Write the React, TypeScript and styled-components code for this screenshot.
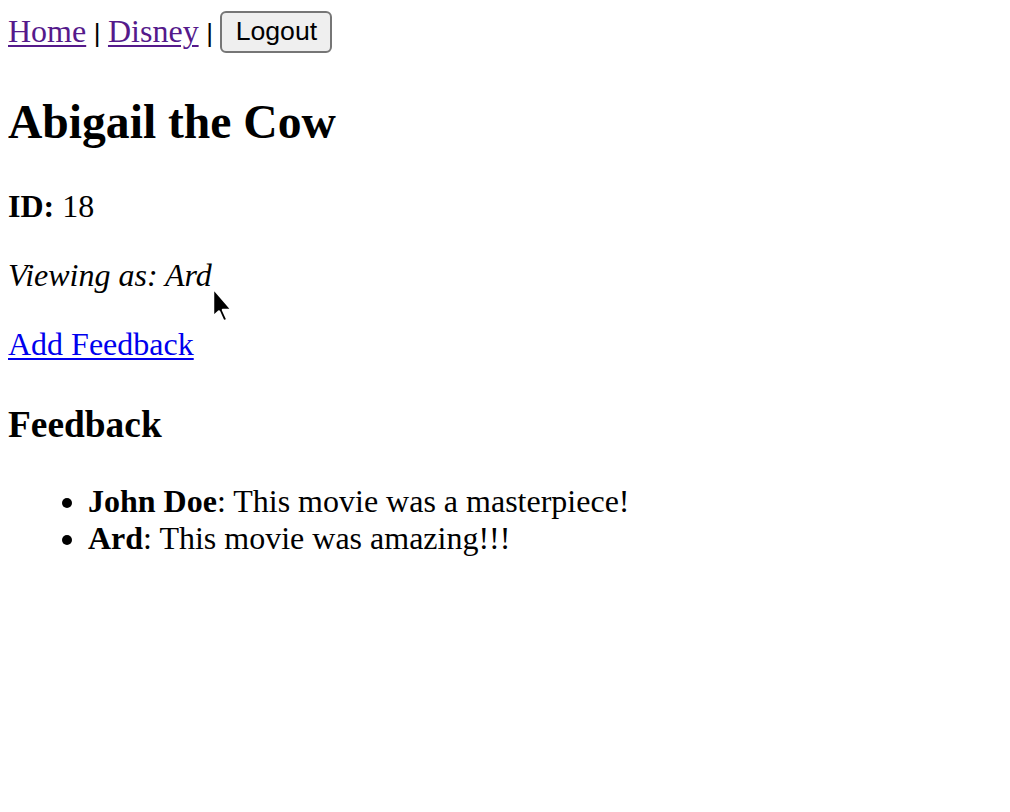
import React from "react";
import styled, { createGlobalStyle } from "styled-components";

const Global = createGlobalStyle`
  html, body { background: #fff; }
  body {
    margin: 8px;
    font-family: "Liberation Serif", "Times New Roman", serif;
    font-size: 32px;
    color: #000;
  }
`;

const Page = styled.div`
  position: relative;
`;

const Nav = styled.nav`
  display: block;
  line-height: 46px;
`;

const NavLink = styled.a<{ $visited?: boolean }>`
  color: ${(p) => (p.$visited ? "#551a8b" : "#0000ee")};
  text-decoration: underline;
  text-decoration-thickness: 2px;
  text-underline-offset: 3px;
`;

const Sep = styled.span`
  font-family: "Liberation Sans", Arial, sans-serif;
  font-size: 26px;
  margin: 0 7.5px;
`;

const Button = styled.button`
  font-family: "Liberation Sans", Arial, sans-serif;
  font-size: 26.67px;
  height: 42px;
  width: 112px;
  padding: 0;
  background: #efefef;
  border: 2px solid #767676;
  border-radius: 6px;
  color: #000;
  vertical-align: middle;
  position: relative;
  top: -3px;
`;

const Title = styled.h1`
  font-size: 47.6px;
  font-weight: bold;
  margin: 39px 0 39px;
`;

const Para = styled.p`
  margin: 32px 0;
`;

const Italic = styled.p`
  margin: 32px 0;
  font-style: italic;
`;

const SubTitle = styled.h3`
  font-size: 37.4px;
  font-weight: bold;
  margin: 40px 0 37px;
`;

const List = styled.ul`
  margin: 32px 0;
  padding-left: 80px;
  list-style: disc;
`;

const Item = styled.li`
  line-height: 37px;
`;

const Cursor = styled.svg`
  position: absolute;
  left: 189px;
  top: 264px;
  pointer-events: none;
`;

export default function App() {
  return (
    <>
      <Global />
      <Page>
        <Nav>
          <NavLink href="#" $visited>Home</NavLink>
          <Sep>|</Sep>
          <NavLink href="#" $visited>Disney</NavLink>
          <Sep>|</Sep>
          <Button>Logout</Button>
        </Nav>
        <Title>Abigail the Cow</Title>
        <Para>
          <strong>ID:</strong> 18
        </Para>
        <Italic>Viewing as: Ard</Italic>
        <Para>
          <NavLink href="#">Add Feedback</NavLink>
        </Para>
        <SubTitle>Feedback</SubTitle>
        <List>
          <Item>
            <strong>John Doe</strong>: This movie was a masterpiece!
          </Item>
          <Item>
            <strong>Ard</strong>: This movie was amazing!!!
          </Item>
        </List>
        <Cursor width="40" height="54" viewBox="0 0 40 54">
          <path
            d="M16 16 L16 45 L22 39.5 L26.5 49.5 L30.5 47.8 L26 38 L35 38 Z"
            fill="#000"
            stroke="#fff"
            strokeWidth="2.5"
            strokeLinejoin="round"
          />
        </Cursor>
      </Page>
    </>
  );
}
